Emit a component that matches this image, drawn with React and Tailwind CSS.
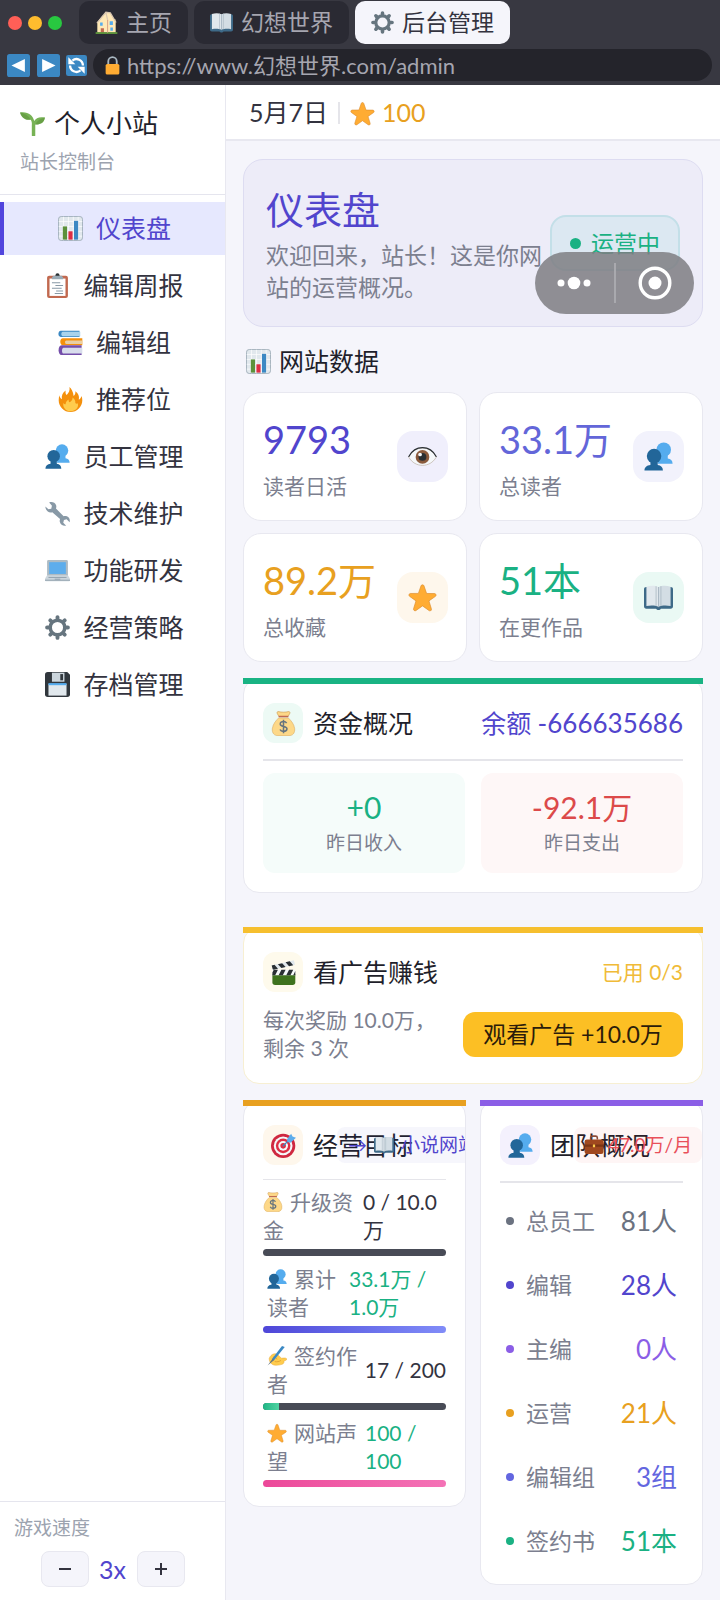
import React, { useState } from 'react';

// Emoji drawings, all on a 36x36 grid
const EMOJI = {
    star: (
        <path fill="#FFAC33" stroke="#D98A2B" strokeWidth=".8" d="M27.3 34.6c-.4 0-.8-.1-1.2-.4L18 28.4l-8.1 5.8a2 2 0 0 1-3-2.2l3-9.8-8-5.7A2 2 0 0 1 3 13l9.9-.1 3.2-9.3a2 2 0 0 1 3.8 0l3.2 9.4 9.9.1a2 2 0 0 1 1.1 3.5L26 22.2l3 9.8a2 2 0 0 1-1.7 2.6z" />
    ),
    gear: (
        <g stroke="#66757F" strokeLinecap="round" fill="none">
            <circle cx="18" cy="18" r="10.500" strokeWidth="5" />
            <path strokeWidth="5.600" d="M18 5V3M18 31v2M5 18H3M31 18h2M8.800 8.800 7.600 7.600M27.200 27.200l1.200 1.200M27.200 8.800l1.200-1.200M8.800 27.200l-1.200 1.200" />
        </g>
    ),
    chart: (
        <g>
            <rect x=".7" y=".7" width="34.6" height="34.6" rx="4" fill="#E1E8ED" stroke="#9AAAB4" strokeWidth="1.2" />
            <path stroke="#fff" strokeWidth="1" d="M1 8h34M1 15h34M1 22h34M1 29h34M8 1v34M15 1v34M22 1v34M29 1v34" />
            <rect x="7" y="15" width="6" height="19" fill="#5C913B" />
            <rect x="15" y="22" width="6" height="12" fill="#DD2E44" />
            <rect x="23" y="7" width="6" height="27" fill="#3B88C3" />
        </g>
    ),
    people: (
        <g>
            <circle cx="24.500" cy="9.500" r="9" fill="#55ACEE" />
            <path fill="#55ACEE" d="M20 14h9.500v6.500c3.500.4 6 2.500 6 6.500H17z" />
            <circle cx="12.500" cy="17.500" r="9" fill="#226699" />
            <path fill="#226699" d="M8 23h9v5.500c4 .4 6.500 2.800 6.500 7H.6c0-4.200 2.900-6.600 7.400-7z" />
        </g>
    ),
    clipboard: (
        <g>
            <rect x="3" y="4" width="30" height="32" rx="3" fill="#C1694F" />
            <path fill="#fff" d="M6.500 8h23v25h-23z" />
            <circle cx="18" cy="3.500" r="3" fill="#292F33" />
            <path fill="#99AAB5" d="M12 4h12l2 2.500V9H10V6.500z" />
            <path stroke="#8899A6" strokeWidth="1.500" d="M10 14h12M15 18h11M10 22h14M16 26h10M14 29.500h12" />
        </g>
    ),
    books: (
        <g>
            <path fill="#3B88C3" d="M4 1h27v9H4C-.5 10-.5 1 4 1z" />
            <path fill="#A9D3EC" d="M7 2.500h25V9H7C4 9 4 2.500 7 2.500z" />
            <path fill="#F4900C" d="M7 12h28v10H7c-5 0-5-10 0-10z" />
            <path fill="#E8CFA5" d="M12 15h23v5H12c-2.500 0-2.500-5 0-5z" />
            <path fill="#744EAA" d="M5 22h29v14H5c-5.500 0-5.500-14 0-14z" />
            <path fill="#D8DDEC" d="M8 25.500h27v8.500H8c-3 0-3-8.500 0-8.500z" />
        </g>
    ),
    fire: (
        <g>
            <path fill="#F4900C" d="M35 19c0-2.100-.4-4.200-1.100-6-.5 2.200-1.600 4-3.900 5.200.8-5-.5-9-5-12 .3 3-.4 5-2.500 6.800C22 7.500 19.500 2.500 16.500 0c1 5-1 8-4 11.500C11 10.500 10.500 8 11 5 6.500 8 5 12 5.500 17.500 3.500 16.500 2.300 14.500 2.200 12 1.400 14.200 1 16.500 1 19c0 9.400 7.600 17 17 17s17-7.600 17-17z" />
            <path fill="#FFCC4D" d="M28.400 23.500c-1.400.8-2.600.5-3.400-.5.300-3-1-6-4-8 .2 3-1.500 5-4 7-1.500-.5-2-2-1.500-4-3.500 2-4.500 4.500-4.500 7-1.500 0-2.500-.8-3.200-2C6.500 28.500 10.500 35 18 35s12.500-5.500 10.400-11.500z" />
        </g>
    ),
    wrench: (
        <path fill="#8899A6" d="M.5 8 5 12l4-1 1-4.200L6 2C10 .5 14.500 2 16 6c.5 1.500.4 3.200-.2 4.700l11 11.200c1.500-.5 3.200-.4 4.700.1 3.500 1.400 4.800 5 4 8.500l-4.400-4.200-3.800 1-1 4 4.200 4.200c-4 1-8.300-1.200-9.200-5.500-.3-1.400-.1-2.800.4-4L10.500 16.300C6 18 .5 14 .5 8z" />
    ),
    laptop: (
        <g>
            <path fill="#AEBBC3" d="M3 5a2 2 0 0 1 2-2h26a2 2 0 0 1 2 2v21H3z" />
            <path fill="#5DADEC" d="M6 6h24v17H6z" />
            <path fill="#CCD6DD" d="M3 25h30l3 5v2a1.500 1.500 0 0 1-1.500 1.500h-33A1.500 1.500 0 0 1 0 32v-2z" />
            <path stroke="#8899A6" strokeWidth="1.200" d="M5 28h26M14 30.500h8M0 32h36" />
        </g>
    ),
    floppy: (
        <g>
            <path fill="#31373D" d="M4 0h28l4 4v28a4 4 0 0 1-4 4H4a4 4 0 0 1-4-4V4a4 4 0 0 1 4-4z" />
            <path fill="#CCD6DD" d="M10 1h18v13H10z" />
            <path fill="#31373D" d="M22 3h4v9h-4z" />
            <path fill="#E1E8ED" d="M5 17h26v17H5z" />
            <path fill="#55ACEE" d="M5 16h26v3H5z" />
        </g>
    ),
    seedling: (
        <g>
            <path fill="#77B255" d="M22 35.500V19.500C29 20 34.500 17.500 36 9.500c-8-1.500-13 .5-15.500 5C18.500 6 12 .5 0 2c2.500 8 8 11.500 15.500 10.500 1.500 2 1.800 5 1.500 8v15c0 .8 5 .8 5 0z" />
            <path fill="#5C913B" d="M0 2c6 1 12 4 15.500 10.500C8 13.500 2.500 10 0 2zM36 9.500c-6 1.200-11 4.500-14 10 7 .5 12.500-2 14-10z" opacity=".55" />
        </g>
    ),
    house: (
        <g>
            <path fill="#F5E6AB" d="M4 34V17L12 7l7 8v19zM19 13h13v21H19z" />
            <path fill="#FFE8B6" d="M4 18 17 2l7 1 8 14v17H4z" />
            <path fill="none" stroke="#DAC8B1" strokeWidth="2" d="M3 19 17 2l7 1 9 15M17 2l3 13" />
            <path fill="#55ACEE" d="M8 18h4v5H8zM23 16h5v6h-5zM24 26h4v5h-4z" />
            <path fill="#C1694F" d="M9 27h5v7H9z" />
            <path fill="#5C913B" d="M1 33h34v3H1z" />
            <path fill="#D99E82" d="M19 14h1.500v20H19z" />
        </g>
    ),
    book: (
        <g>
            <path fill="#3E6A88" d="M0 8c0-2 1-3 3-3h30c2 0 3 1 3 3v21c0 2-1 3-3 3H21c-1 2-5 2-6 0H3c-2 0-3-1-3-3z" />
            <path fill="#E1E8ED" d="M3 4.500C8 3 14 3 18 5v24.500c-4-2-10-2-15-1z" />
            <path fill="#D3DDE4" d="M33 4.500C28 3 22 3 18 5v24.500c4-2 10-2 15-1z" />
            <path fill="none" stroke="#A9B7C1" strokeWidth="1" d="M18 5v25M15 4v24.500M21 4v24.500" />
        </g>
    ),
    eye: (
        <g>
            <path fill="#F5F8FA" stroke="#B7A99A" strokeWidth=".8" d="M1 19C5 11 11 7.500 18 7.500S31 11 35 19c-4 6.500-10 10-17 10S5 25.500 1 19z" />
            <circle cx="18" cy="18.500" r="8.500" fill="#8A5A3C" />
            <circle cx="18" cy="18.500" r="4.800" fill="#292F33" />
            <circle cx="15" cy="15.500" r="2.300" fill="#F5F8FA" />
            <path fill="none" stroke="#292F33" strokeWidth="1.400" strokeLinecap="round" d="M1 18C5 10.500 11 7 18 7s13 3.500 17 11" />
        </g>
    ),
    money: (
        <g>
            <path fill="#FDD888" stroke="#D9A85C" strokeWidth=".8" d="M25 10c4 4 8 8.500 9 15 .9 7-3 10.500-8 10.500H10C5 35.500 1 32 2 25c1-6.500 5-11 9-15z" />
            <path fill="#FDD888" stroke="#C98F3F" strokeWidth=".8" d="M10.500.8c5 1.200 10 1.200 15 0 2 0 2.200 2 1.200 3.400L24.500 8h-13L9.300 4.200C8.300 2.800 8.500.8 10.500.8z" />
            <path fill="#BF6952" d="M11 7h14v2H11z" />
            <path fill="none" stroke="#67757F" strokeWidth="2.200" d="M22.500 17.500c-1-1.800-2.500-2.300-4.500-2.300-2.800 0-4.700 1.300-4.700 3.500 0 5.300 9.700 2 9.700 7 0 2.300-2 3.700-5 3.700-2.200 0-4.200-.8-5-2.800M18 12.500v19.500" />
        </g>
    ),
    clapper: (
        <g>
            <path fill="#3E721D" d="M2 20h33v12a4 4 0 0 1-4 4H6a4 4 0 0 1-4-4z" />
            <path fill="#F5F8FA" d="M2 14h33v8H2z" />
            <path fill="#292F33" d="M4 14h6l-4 8H2v-4zM15 14h6l-4 8h-6zM26 14h6l-4 8h-6zM35 16v6h-3z" />
            <path fill="#E1E8ED" d="M1 8 33 .5 34.500 7 2.500 14.500z" />
            <path fill="#292F33" d="m1 8 4-1 5 5.700-6 1.500-1.500-1zM10 6l6-1.500 5 5.700-6 1.400zM21 3.300l6-1.400 5 5.600-6 1.500z" />
        </g>
    ),
    target: (
        <g>
            <circle cx="17.500" cy="18.500" r="17.500" fill="#CF2840" />
            <circle cx="17.500" cy="18.500" r="13.500" fill="#F5F8FA" />
            <circle cx="17.500" cy="18.500" r="10.500" fill="#DD2E44" />
            <circle cx="17.500" cy="18.500" r="7" fill="#F5F8FA" />
            <circle cx="17.500" cy="18.500" r="4" fill="#DD2E44" />
            <path stroke="#3B88C3" strokeWidth="1.800" d="M17 19 29 7" />
            <path fill="#5DADEC" d="m23 9 6-8 2 4 5 2-8 7-4-1z" />
        </g>
    ),
    writing: (
        <g>
            <path fill="#FFCC4D" stroke="#E5A93A" strokeWidth=".8" d="M4 22c2-5 7-9 12-8l5 3 5 5c4-.5 8-1 9.500 1 1 2-2 3-5 4 1 4-2 6-5 6.500-6 1.500-13 2-17-1-3-2.500-5-6-4.500-10.500z" />
            <path fill="none" stroke="#D9962B" strokeWidth="1.300" d="M11 20c3 0 6 1 7 4M14 28c4 1 8 0 11-2" />
            <path fill="#3B88C3" d="m27 0 5 2L13 25l-4 2 1-5z" />
            <path fill="#66757F" d="m10 23 3 2-12 10z" />
        </g>
    ),
    briefcase: (
        <g>
            <path fill="none" stroke="#8A4B38" strokeWidth="2.800" d="M12 8V5c0-2 1-3 3-3h6c2 0 3 1 3 3v3" />
            <rect x="1" y="8" width="34" height="26" rx="4" fill="#A0481F" />
            <path fill="#7B3514" d="M1 17h34v4H1z" />
            <path fill="#FFCC4D" d="M16 17h4v5h-4z" />
        </g>
    ),
    lock: (
        <g>
            <path fill="none" stroke="#AAB8C2" strokeWidth="3.500" d="M10 17v-7a8 8 0 0 1 16 0v7" />
            <rect x="5" y="15" width="26" height="20" rx="3" fill="#FFAC33" />
        </g>
    ),
    back: (
        <g>
            <rect width="36" height="36" rx="4" fill="#3B88C3" />
            <path fill="#fff" d="M28 8v20L7 18z" />
        </g>
    ),
    forward: (
        <g>
            <rect width="36" height="36" rx="4" fill="#3B88C3" />
            <path fill="#fff" d="M8 8v20l21-10z" />
        </g>
    ),
    reload: (
        <g>
            <rect width="36" height="36" rx="4" fill="#3B88C3" />
            <path fill="none" stroke="#fff" strokeWidth="4" d="M11 9.500a11 11 0 0 1 18 8.500M25 26.500A11 11 0 0 1 7 18" />
            <path fill="#fff" d="M4 4v12h12zM32 32V20H20z" />
        </g>
    ),
};

const Emoji = ({ name, className }) => (
    <svg viewBox="0 0 36 36" className={`shrink-0 ${className}`} aria-hidden="true">
        {EMOJI[name]}
    </svg>
);

const TABS = [
    { icon: 'house', label: '主页' },
    { icon: 'book', label: '幻想世界' },
    { icon: 'gear', label: '后台管理', active: true },
];

const MENU = [
    { icon: 'chart', label: '仪表盘' },
    { icon: 'clipboard', label: '编辑周报' },
    { icon: 'books', label: '编辑组' },
    { icon: 'fire', label: '推荐位' },
    { icon: 'people', label: '员工管理' },
    { icon: 'wrench', label: '技术维护' },
    { icon: 'laptop', label: '功能研发' },
    { icon: 'gear', label: '经营策略' },
    { icon: 'floppy', label: '存档管理' },
];

const STATS = [
    { value: '9793', label: '读者日活', icon: 'eye', color: 'text-[#5145cd]', box: 'bg-[#f0effc]' },
    { value: '33.1万', label: '总读者', icon: 'people', color: 'text-[#6366d9]', box: 'bg-[#f2f2fc]' },
    { value: '89.2万', label: '总收藏', icon: 'star', color: 'text-[#e8a020]', box: 'bg-[#fef7ec]' },
    { value: '51本', label: '在更作品', icon: 'book', color: 'text-[#1ab183]', box: 'bg-[#eaf9f4]' },
];

const GOALS = [
    { icon: 'money', label: '升级资金', value: '0 / 10.0万', pad: '', width: 'w-[83px]', color: 'text-[#33333f]', percent: 0, bar: '' },
    { icon: 'people', label: '累计读者', value: '33.1万 / 1.0万', pad: 'pl-1', width: 'w-[97px]', color: 'text-[#1ab183]', percent: 100, bar: 'from-[#4f46d8] to-[#818cf8]' },
    { icon: 'writing', label: '签约作者', value: '17 / 200', pad: 'pl-1', width: '', color: 'text-[#33333f]', percent: 8.5, bar: 'from-[#1cb585] to-[#4fd3a2]' },
    { icon: 'star', label: '网站声望', value: '100 / 100', pad: 'pl-1', width: 'w-[81px]', color: 'text-[#1ab183]', percent: 100, bar: 'from-[#ec4899] to-[#f472b6]' },
];

const TEAM = [
    { label: '总员工', value: '81人', color: 'text-[#6b7280]', dot: 'bg-[#6b7280]' },
    { label: '编辑', value: '28人', color: 'text-[#5145cd]', dot: 'bg-[#5145cd]' },
    { label: '主编', value: '0人', color: 'text-[#8b5ee6]', dot: 'bg-[#8b5ee6]' },
    { label: '运营', value: '21人', color: 'text-[#e8a020]', dot: 'bg-[#e8a020]' },
    { label: '编辑组', value: '3组', color: 'text-[#6366e0]', dot: 'bg-[#6366e0]' },
    { label: '签约书', value: '51本', color: 'text-[#1ab183]', dot: 'bg-[#1ab183]' },
];

const Panel = ({ accent, border = 'border-[#e8e8f0]', className = '', children }) => (
    <section className={`relative ${className}`}>
        <div className={`overflow-hidden rounded-2xl border bg-white px-[19px] pt-6 pb-[19px] ${border}`}>{children}</div>
        <div className={`absolute inset-x-0 top-0 h-1.5 ${accent}`} />
    </section>
);

const PanelTitle = ({ icon, box, children }) => (
    <div className="flex shrink-0 items-center gap-[10px]">
        <span className={`flex h-10 w-10 items-center justify-center rounded-xl ${box}`}>
            <Emoji name={icon} className="h-[25px] w-[25px]" />
        </span>
        <h2 className="whitespace-nowrap text-[25px] leading-10 text-[#1f1f2b]">{children}</h2>
    </div>
);

const BrowserBar = () => (
    <header className="bg-[#383841] pt-px pb-1">
        <div className="flex items-center">
            <div className="flex gap-[6px] pl-2 pr-[17px]">
                <span className="h-[14px] w-[14px] rounded-full bg-[#ff5f57]" />
                <span className="h-[14px] w-[14px] rounded-full bg-[#febc2e]" />
                <span className="h-[14px] w-[14px] rounded-full bg-[#28c840]" />
            </div>
            <div className="flex gap-[6px]">
                {TABS.map((tab) => (
                    <button
                        key={tab.label}
                        className={`flex h-[43px] items-center gap-2 rounded-[10px] px-4 text-[23px] ${tab.active ? 'bg-[#f5f5fb] text-[#33333f]' : 'bg-[#2a2a33] text-[#a6a6b0]'
                            }`}
                    >
                        <Emoji name={tab.icon} className="h-[23px] w-[23px]" />
                        {tab.label}
                    </button>
                ))}
            </div>
        </div>
        <div className="mt-[5px] flex items-center gap-[6px] pl-[7px] pr-2">
            <button aria-label="后退"><Emoji name="back" className="h-[23px] w-[23px]" /></button>
            <button aria-label="前进" className="ml-px"><Emoji name="forward" className="h-[23px] w-[23px]" /></button>
            <button aria-label="刷新"><Emoji name="reload" className="h-[21px] w-[21px]" /></button>
            <label className="flex h-8 flex-1 items-center gap-[5px] rounded-full bg-[#24242b] pl-[10px]">
                <Emoji name="lock" className="h-[19px] w-[19px]" />
                <input
                    aria-label="地址"
                    readOnly
                    value="https://www.幻想世界.com/admin"
                    className="h-8 min-w-0 flex-1 bg-transparent text-[22px] text-[#a6a6b0] outline-none"
                />
            </label>
        </div>
    </header>
);

const Sidebar = () => {
    const [active, setActive] = useState('仪表盘');
    const [speed, setSpeed] = useState(3);

    return (
        <aside className="flex w-[226px] shrink-0 flex-col border-r border-[#e8e8f0] bg-white">
            <div className="border-b border-[#e5e5ee] px-5 pt-[18px] pb-[18px]">
                <h1 className="flex items-center gap-[9px] text-[26px] leading-10 text-[#1f1f2b]">
                    <Emoji name="seedling" className="h-[25px] w-[25px]" />
                    个人小站
                </h1>
                <p className="mt-[5px] text-[19px] leading-7 text-[#9ca3af]">站长控制台</p>
            </div>
            <nav className="mt-[7px] flex flex-col gap-1">
                {MENU.map((item) => (
                    <button
                        key={item.label}
                        onClick={() => setActive(item.label)}
                        className={`flex h-[53px] items-center justify-center gap-[13px] border-l-4 text-[25px] ${active === item.label
                                ? 'border-[#5145dd] bg-[#e6e8fe] text-[#5145cd]'
                                : 'border-transparent text-[#33333f]'
                            }`}
                    >
                        <Emoji name={item.icon} className="h-[25px] w-[25px]" />
                        {item.label}
                    </button>
                ))}
            </nav>
            <div className="mt-auto border-t border-[#e5e5ee] px-[14px] pt-3 pb-[15px]">
                <p className="text-[19px] leading-7 text-[#9ca3af]">游戏速度</p>
                <div className="mt-[9px] flex items-center justify-center gap-[9px]">
                    <button
                        aria-label="减速"
                        onClick={() => setSpeed(Math.max(1, speed - 1))}
                        className="flex h-9 w-12 items-center justify-center rounded-lg border border-[#e8e8f0] bg-[#f5f5fb] text-[#33333f]"
                    >
                        <svg viewBox="0 0 12 12" className="h-3 w-3"><path stroke="currentColor" strokeWidth="2" d="M0 6h12" /></svg>
                    </button>
                    <span className="w-[30px] text-center text-[25px] leading-9 text-[#5145cd]">{speed}x</span>
                    <button
                        aria-label="加速"
                        onClick={() => setSpeed(speed + 1)}
                        className="flex h-9 w-12 items-center justify-center rounded-lg border border-[#e8e8f0] bg-[#f5f5fb] text-[#33333f]"
                    >
                        <svg viewBox="0 0 12 12" className="h-3 w-3"><path stroke="currentColor" strokeWidth="2" d="M0 6h12M6 0v12" /></svg>
                    </button>
                </div>
            </div>
        </aside>
    );
};

const Hero = () => (
    <section className="relative flex items-center gap-2 rounded-[20px] border border-[#dddcf1] bg-[#edecf8] px-[22px] py-[23px]">
        <div className="min-w-0 flex-1">
            <h2 className="text-[38px] leading-[52px] text-[#5145cd]">仪表盘</h2>
            <p className="mt-1 text-[23px] leading-8 text-[#7c7f8f]">欢迎回来，站长！这是你网站的运营概况。</p>
        </div>
        <span className="flex h-14 shrink-0 items-center gap-[10px] rounded-2xl border-2 border-[#c3dfe8] bg-[#dce8f2] px-[18px] text-[23px] text-[#1ab183]">
            <i className="h-[11px] w-[11px] rounded-full bg-[#1ab183]" />
            运营中
        </span>
        {/* Floating capsule over the card corner */}
        <div className="absolute right-2 bottom-3 flex h-[62px] w-[159px] items-center rounded-full bg-[#7e7e83]/85">
            <button aria-label="更多" className="flex flex-1 justify-center">
                <svg viewBox="0 0 36 14" className="h-[14px] w-9" fill="#fff">
                    <circle cx="5" cy="7" r="3.500" />
                    <circle cx="18" cy="7" r="6.300" />
                    <circle cx="31" cy="7" r="3.500" />
                </svg>
            </button>
            <span className="h-10 w-[2px] bg-[#a9a9ae]" />
            <button aria-label="关闭" className="flex flex-1 justify-center">
                <svg viewBox="0 0 34 34" className="h-[34px] w-[34px]">
                    <circle cx="17" cy="17" r="14.800" fill="none" stroke="#fff" strokeWidth="3.400" />
                    <circle cx="17" cy="17" r="6.500" fill="#fff" />
                </svg>
            </button>
        </div>
    </section>
);

const App = () => {
    return (
        <div className="flex min-h-screen flex-col bg-[#f5f5fb] font-['Lato','Noto_Sans_CJK_SC',sans-serif]">
            <BrowserBar />
            <div className="flex flex-1">
                <Sidebar />
                <main className="min-w-0 flex-1">
                    <div className="flex h-14 items-center border-b-2 border-[#e8e8f0] bg-white px-[23px] pt-[2px] text-[25px] text-[#33333f]">
                        <span>5月7日</span>
                        <span className="mx-[10px] h-[22px] w-[2px] bg-[#e5e5ea]" />
                        <Emoji name="star" className="h-[25px] w-[25px]" />
                        <span className="ml-[7px] text-[#e8a020]">100</span>
                    </div>

                    <div className="flex flex-col px-[17px] pt-[18px] pb-[17px]">
                        <Hero />

                        {/* Site stats */}
                        <h2 className="mt-4 flex items-center gap-2 pl-[3px] text-[25px] leading-9 text-[#1f1f2b]">
                            <Emoji name="chart" className="h-[25px] w-[25px]" />
                            网站数据
                        </h2>
                        <div className="mt-[13px] grid grid-cols-2 gap-3">
                            {STATS.map((stat) => (
                                <div key={stat.label} className="flex items-center justify-between rounded-[18px] border border-[#e8e8f0] bg-white pt-[18px] pb-[19px] pl-[19px] pr-[18px]">
                                    <div>
                                        <div className={`whitespace-nowrap text-[38px] leading-[56px] ${stat.color}`}>{stat.value}</div>
                                        <div className="mt-1 text-[21px] leading-[30px] text-[#7c7f8f]">{stat.label}</div>
                                    </div>
                                    <span className={`flex h-[51px] w-[51px] items-center justify-center rounded-2xl ${stat.box}`}>
                                        <Emoji name={stat.icon} className="h-[29px] w-[29px]" />
                                    </span>
                                </div>
                            ))}
                        </div>

                        {/* Funds */}
                        <Panel accent="bg-[#19b383]" className="mt-4">
                            <div className="flex items-center justify-between border-b-2 border-[#e5e5ea] pb-4">
                                <PanelTitle icon="money" box="bg-[#edfaf5]">资金概况</PanelTitle>
                                <span className="text-[25px] text-[#5145cd]">余额 <span className="text-[26px]">-666635686</span></span>
                            </div>
                            <div className="mt-3 grid grid-cols-2 gap-4 text-center">
                                <div className="rounded-xl bg-[#f5fcfa] pt-[14px] pb-4">
                                    <div className="text-[30px] leading-10 text-[#1ab183]">+0</div>
                                    <div className="mt-[2px] text-[19px] leading-7 text-[#7c7f8f]">昨日收入</div>
                                </div>
                                <div className="rounded-xl bg-[#fef7f7] pt-[14px] pb-4">
                                    <div className="text-[30px] leading-10 text-[#dc4a4a]">-92.1万</div>
                                    <div className="mt-[2px] text-[19px] leading-7 text-[#7c7f8f]">昨日支出</div>
                                </div>
                            </div>
                        </Panel>

                        {/* Ads */}
                        <Panel accent="bg-[#f6bf2e]" border="border-[#f7efd2]" className="mt-[34px]">
                            <div className="flex items-center justify-between">
                                <PanelTitle icon="clapper" box="bg-[#fefaec]">看广告赚钱</PanelTitle>
                                <span className="text-[21px] text-[#f0bb38]">已用 0/3</span>
                            </div>
                            <div className="mt-[14px] mb-[2px] flex items-center justify-between gap-4">
                                <p className="text-[21px] leading-7 text-[#7c7f8f]">每次奖励 10.0万，剩余 3 次</p>
                                <button className="h-[45px] w-[220px] shrink-0 rounded-xl bg-[#fcbf24] text-[23px] text-[#2b1c0a]">观看广告 +10.0万</button>
                            </div>
                        </Panel>

                        <div className="mt-4 grid grid-cols-2 items-start gap-[14px]">
                            {/* Goals */}
                            <Panel accent="bg-[#e8a020]">
                                <div className="relative border-b border-[#e5e5ea] pb-[14px]">
                                    <PanelTitle icon="target" box="bg-[#fef7ec]">经营目标</PanelTitle>
                                    <span className="absolute top-[2px] left-[74px] flex h-9 items-center gap-[7px] whitespace-nowrap rounded-lg bg-[#5145cd]/5 px-[11px] text-[19px] text-[#5145cd]">
                                        → <Emoji name="book" className="h-5 w-5" /> 小说网站
                                    </span>
                                </div>
                                <ul className="mt-2 flex flex-col gap-[9px]">
                                    {GOALS.map((goal) => (
                                        <li key={goal.label}>
                                            <div className="flex items-center justify-between gap-1 text-[21px] leading-7">
                                                <span className={`flex-1 text-[#7c7f8f] ${goal.pad}`}>
                                                    <Emoji name={goal.icon} className="mr-[7px] inline-block h-5 w-5 align-[-2px]" />
                                                    {goal.label}
                                                </span>
                                                <span className={`shrink-0 ${goal.width} ${goal.color}`}>{goal.value}</span>
                                            </div>
                                            <div className="mt-[5px] h-[7px] overflow-hidden rounded-full bg-[#484b56]">
                                                <div className={`h-full bg-linear-to-r ${goal.bar}`} style={{ width: `${goal.percent}%` }} />
                                            </div>
                                        </li>
                                    ))}
                                </ul>
                            </Panel>

                            {/* Team */}
                            <Panel accent="bg-[#8b5ee6]">
                                <div className="relative border-b-2 border-[#e5e5ea] pb-4">
                                    <PanelTitle icon="people" box="bg-[#f4f1fd]">团队概况</PanelTitle>
                                    <span className="absolute top-[2px] left-[74px] flex h-9 items-center gap-1 whitespace-nowrap rounded-lg bg-[#ef4444]/5 px-[10px] text-[19px] text-[#e9505a]">
                                        <Emoji name="briefcase" className="h-5 w-5" /> 47.0万/月
                                    </span>
                                </div>
                                <ul className="-mb-2 mt-1.5">
                                    {TEAM.map((row) => (
                                        <li key={row.label} className="flex h-16 items-center px-[6px]">
                                            <i className="flex"><span className={`h-2 w-2 rounded-full ${row.dot}`} /></i>
                                            <span className="ml-3 text-[23px] text-[#7c7f8f]">{row.label}</span>
                                            <span className={`ml-auto text-[26px] ${row.color}`}>{row.value}</span>
                                        </li>
                                    ))}
                                </ul>
                            </Panel>
                        </div>
                    </div>
                </main>
            </div>
        </div>
    );
};

export default App;
